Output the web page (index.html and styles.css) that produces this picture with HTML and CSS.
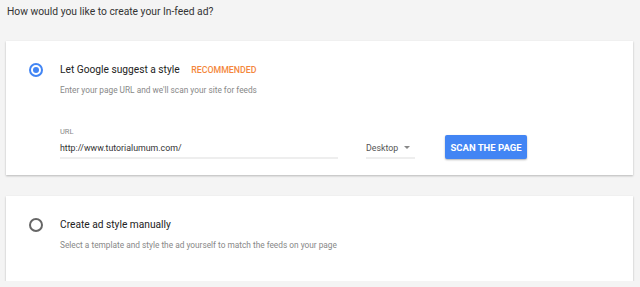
FILE: index.html
```html
<!DOCTYPE html>
<html lang="en">
<head>
    <meta charset="UTF-8">
    <meta name="viewport" content="width=device-width, initial-scale=1.0">
    <title>In-feed ad</title>
    <link rel="stylesheet" href="styles.css">
</head>
<body>
    <h1 class="question">How would you like to create your In-feed ad?</h1>

    <div class="card card-suggest">
        <div class="option">
            <span class="radio checked"></span>
            <div class="option-body">
                <div class="option-title">Let Google suggest a style <span class="badge">RECOMMENDED</span></div>
                <div class="option-desc">Enter your page URL and we'll scan your site for feeds</div>
                <div class="scan-row">
                    <div class="field url-field">
                        <label class="field-label">URL</label>
                        <div class="field-value">http://www.tutorialumum.com/</div>
                    </div>
                    <div class="field device-field">
                        <div class="field-value">Desktop <span class="caret"></span></div>
                    </div>
                    <button class="scan-btn">SCAN THE PAGE</button>
                </div>
            </div>
        </div>
    </div>

    <div class="card card-manual">
        <div class="option">
            <span class="radio"></span>
            <div class="option-body">
                <div class="option-title">Create ad style manually</div>
                <div class="option-desc">Select a template and style the ad yourself to match the feeds on your page</div>
            </div>
        </div>
    </div>
</body>
</html>
```

FILE: styles.css
```css
body {
    font-family: Roboto, "Liberation Sans", Arial, sans-serif;
    background-color: #f4f4f4;
    margin: 0;
    padding: 0 7px 0 6px;
    color: #333;
}
.question {
    font-size: 10.3px;
    font-weight: 400;
    margin: 0;
    padding: 5px 0 0 1px;
    height: 36px;
    box-sizing: border-box;
    line-height: 14px;
    color: #333;
}
.card {
    background: white;
    box-shadow: 0 1px 2px rgba(0, 0, 0, 0.25);
}
.card-suggest {
    height: 134px;
    margin-top: 5px;
    margin-bottom: 21px;
}
.card-manual {
    height: 85px;
}
.option {
    display: flex;
    padding: 22px 0 0 23px;
}
.radio {
    width: 10px;
    height: 10px;
    border: 2px solid #666;
    border-radius: 50%;
    margin: 0 17px 0 0;
    flex-shrink: 0;
    position: relative;
}
.radio.checked {
    border-color: #4285f4;
}
.radio.checked::after {
    content: "";
    position: absolute;
    left: 2px;
    top: 2px;
    width: 6px;
    height: 6px;
    border-radius: 50%;
    background: #4285f4;
}
.option-body {
    flex: 1;
}
.option-title {
    font-size: 10.2px;
    line-height: 14px;
    color: #222;
}
.badge {
    font-size: 8.8px;
    font-weight: 500;
    color: #f4873c;
    margin-left: 9px;
}
.option-desc {
    font-size: 8.3px;
    line-height: 12px;
    color: #888;
    margin-top: 7px;
}
.scan-row {
    display: flex;
    align-items: flex-end;
    margin-top: 31px;
}
.field {
    border-bottom: 2px solid #eee;
}
.url-field {
    width: 278px;
    margin-right: 28px;
}
.device-field {
    width: 49px;
    margin-right: 30px;
}
.field-label {
    display: block;
    font-size: 7.5px;
    color: #888;
    line-height: 10px;
    margin-bottom: 5px;
}
.field-value {
    font-size: 8.8px;
    line-height: 12px;
    color: #333;
    padding-bottom: 3px;
    white-space: nowrap;
}
.device-field .field-value {
    color: #555;
}
.caret {
    display: inline-block;
    width: 0;
    height: 0;
    border-left: 3.5px solid transparent;
    border-right: 3.5px solid transparent;
    border-top: 3.5px solid #888;
    margin-left: 4px;
    vertical-align: 2px;
}
.scan-btn {
    width: 82px;
    height: 24px;
    border: none;
    border-radius: 2px;
    background: #4285f4;
    color: white;
    font-family: inherit;
    font-size: 9.5px;
    font-weight: 700;
    box-shadow: 0 1px 2px rgba(0, 0, 0, 0.3);
    padding: 0;
    margin-bottom: 0;
}
```
